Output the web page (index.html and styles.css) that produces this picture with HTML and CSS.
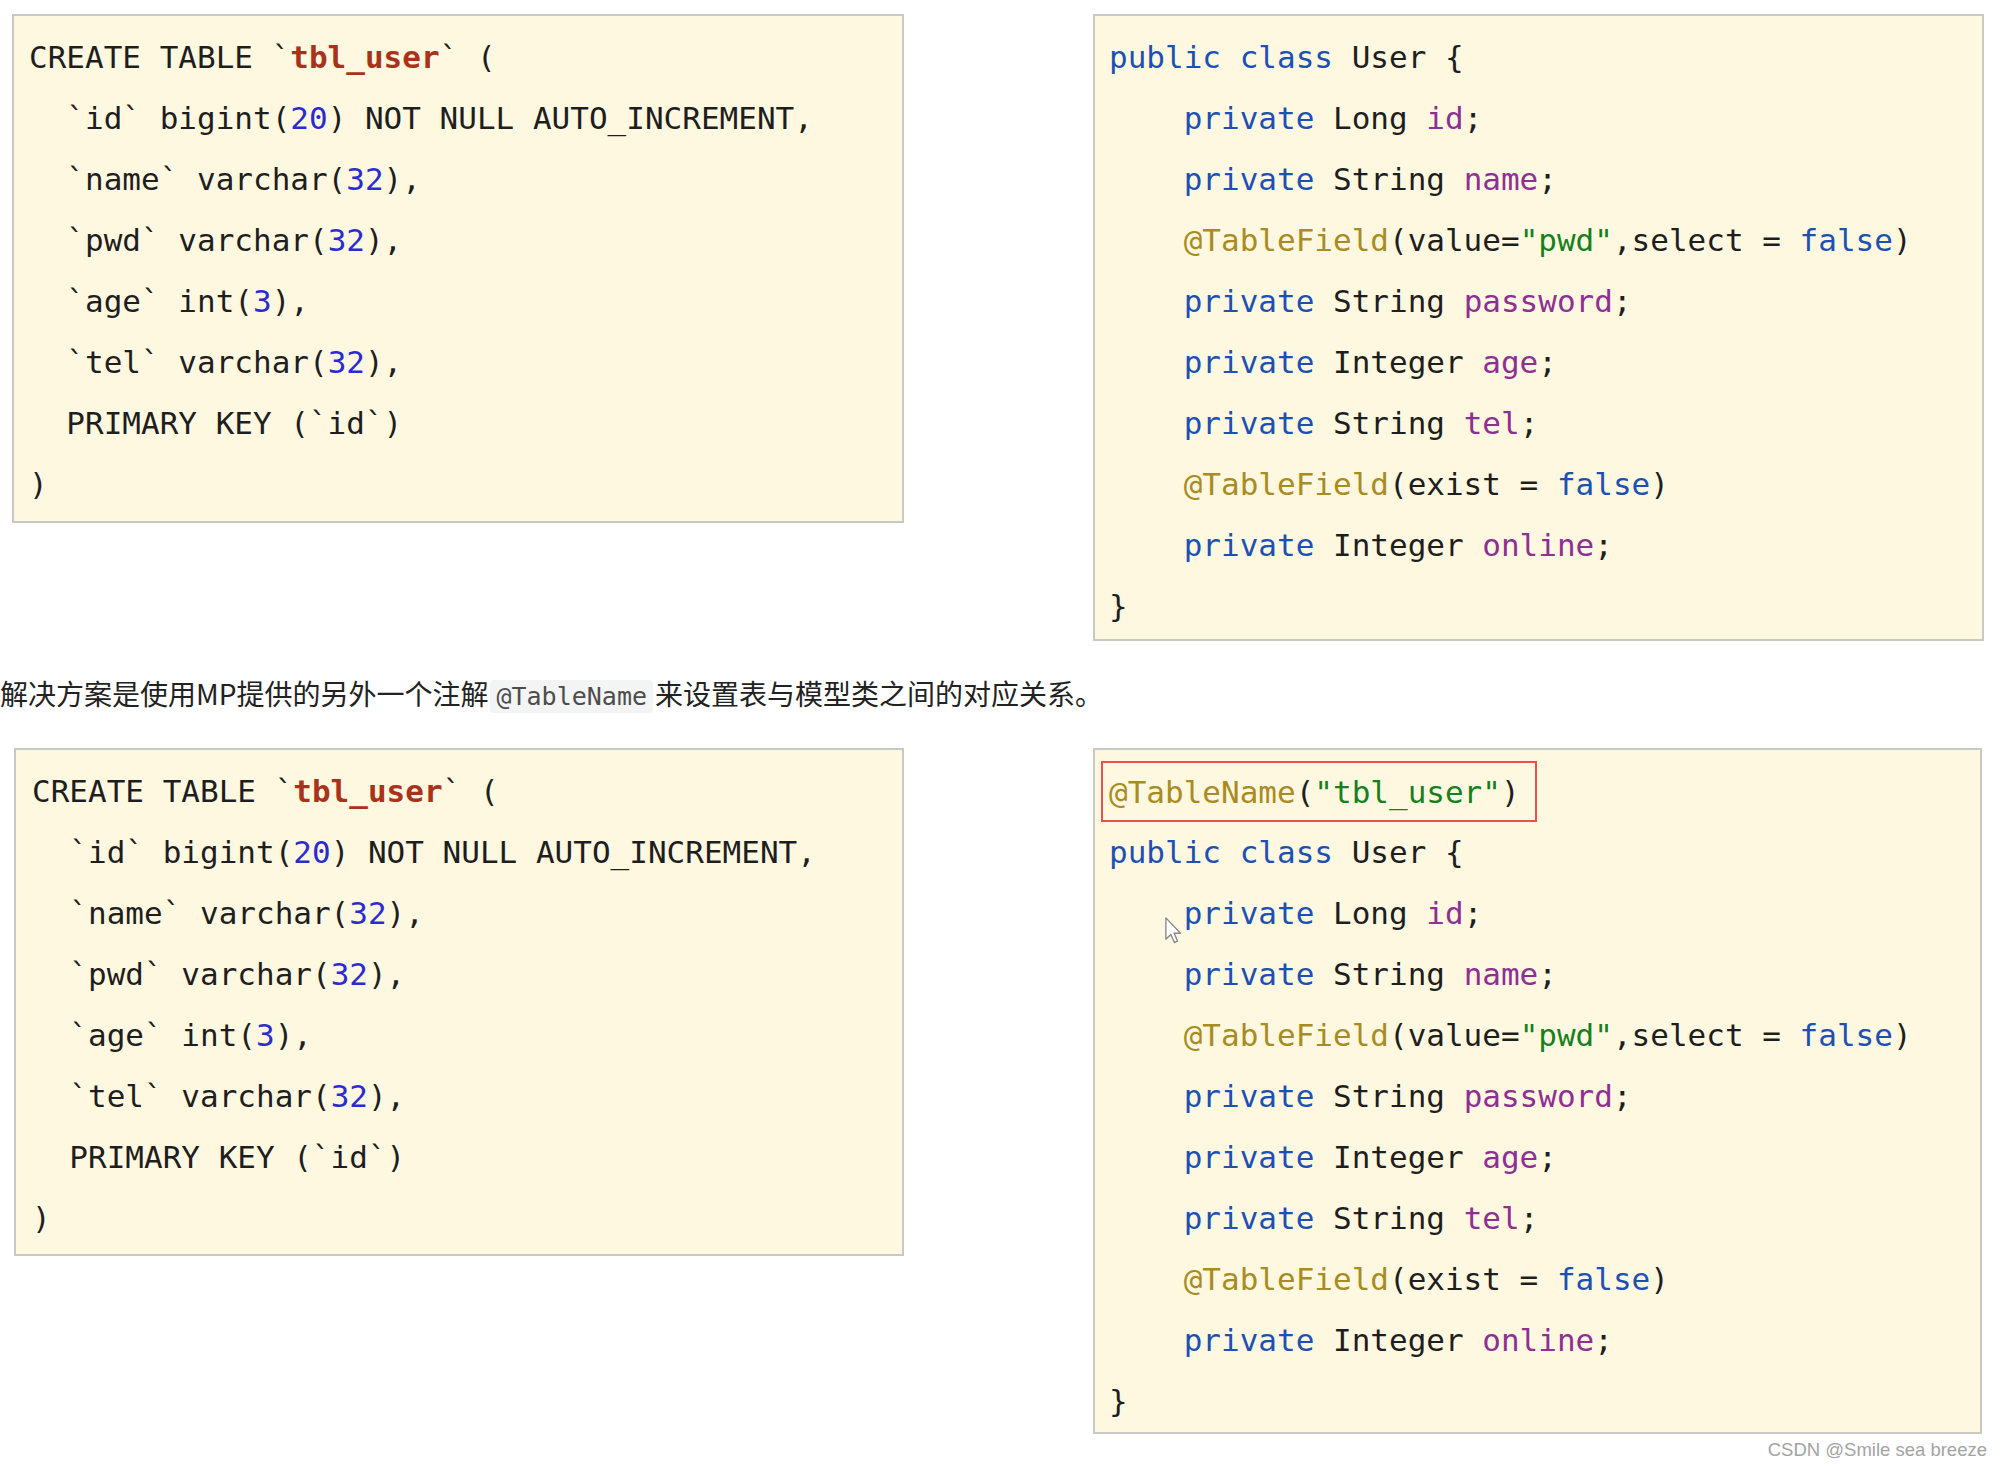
FILE: index.html
```html
<!DOCTYPE html>
<html lang="zh-CN">
<head>
<meta charset="utf-8">
<title>MP @TableName</title>
<link rel="stylesheet" href="styles.css">
</head>
<body>
<div class="page">
  <div class="row row-top">
    <div class="code sql box-tl">
      <div class="ln">CREATE TABLE `<span class="s">tbl_user</span>` (</div>
      <div class="ln">  `id` bigint(<span class="n">20</span>) NOT NULL AUTO_INCREMENT,</div>
      <div class="ln">  `name` varchar(<span class="n">32</span>),</div>
      <div class="ln">  `pwd` varchar(<span class="n">32</span>),</div>
      <div class="ln">  `age` int(<span class="n">3</span>),</div>
      <div class="ln">  `tel` varchar(<span class="n">32</span>),</div>
      <div class="ln">  PRIMARY KEY (`id`)</div>
      <div class="ln">)</div>
    </div>
    <div class="code java box-tr">
      <div class="ln"><span class="k">public</span> <span class="k">class</span> User {</div>
      <div class="ln">    <span class="k">private</span> Long <span class="f">id</span>;</div>
      <div class="ln">    <span class="k">private</span> String <span class="f">name</span>;</div>
      <div class="ln">    <span class="a">@TableField</span>(value=<span class="str">"pwd"</span>,select = <span class="k">false</span>)</div>
      <div class="ln">    <span class="k">private</span> String <span class="f">password</span>;</div>
      <div class="ln">    <span class="k">private</span> Integer <span class="f">age</span>;</div>
      <div class="ln">    <span class="k">private</span> String <span class="f">tel</span>;</div>
      <div class="ln">    <span class="a">@TableField</span>(exist = <span class="k">false</span>)</div>
      <div class="ln">    <span class="k">private</span> Integer <span class="f">online</span>;</div>
      <div class="ln">}</div>
    </div>
  </div>

  <p class="desc">解决方案是使用MP提供的另外一个注解<code class="inline">@TableName</code>来设置表与模型类之间的对应关系。</p>

  <div class="row row-bottom">
    <div class="code sql box-bl">
      <div class="ln">CREATE TABLE `<span class="s">tbl_user</span>` (</div>
      <div class="ln">  `id` bigint(<span class="n">20</span>) NOT NULL AUTO_INCREMENT,</div>
      <div class="ln">  `name` varchar(<span class="n">32</span>),</div>
      <div class="ln">  `pwd` varchar(<span class="n">32</span>),</div>
      <div class="ln">  `age` int(<span class="n">3</span>),</div>
      <div class="ln">  `tel` varchar(<span class="n">32</span>),</div>
      <div class="ln">  PRIMARY KEY (`id`)</div>
      <div class="ln">)</div>
    </div>
    <div class="code java box-br">
      <div class="ln hl"><span class="a">@TableName</span>(<span class="str">"tbl_user"</span>)</div>
      <div class="ln"><span class="k">public</span> <span class="k">class</span> User {</div>
      <div class="ln">    <span class="k">private</span> Long <span class="f">id</span>;</div>
      <div class="ln">    <span class="k">private</span> String <span class="f">name</span>;</div>
      <div class="ln">    <span class="a">@TableField</span>(value=<span class="str">"pwd"</span>,select = <span class="k">false</span>)</div>
      <div class="ln">    <span class="k">private</span> String <span class="f">password</span>;</div>
      <div class="ln">    <span class="k">private</span> Integer <span class="f">age</span>;</div>
      <div class="ln">    <span class="k">private</span> String <span class="f">tel</span>;</div>
      <div class="ln">    <span class="a">@TableField</span>(exist = <span class="k">false</span>)</div>
      <div class="ln">    <span class="k">private</span> Integer <span class="f">online</span>;</div>
      <div class="ln">}</div>
    </div>
  </div>

  <div class="watermark">CSDN @Smile sea breeze</div>

  <svg class="cursor" width="20" height="30" viewBox="0 0 16 24" aria-hidden="true">
    <path d="M1.5 1.5 L1.5 18.5 L5.5 14.8 L8.3 21.2 L10.8 20.1 L8.1 13.8 L13.2 13.8 Z" fill="#ffffff" stroke="#8a8a8a" stroke-width="1.1" stroke-linejoin="round"/>
  </svg>
</div>
</body>
</html>
```

FILE: styles.css
```css
* {
  box-sizing: border-box;
}

html, body {
  margin: 0;
  padding: 0;
  background: #ffffff;
}

.page {
  position: relative;
  width: 2003px;
  min-height: 1466px;
  padding-top: 14px;
  font-family: "Noto Sans CJK SC", "Noto Sans", sans-serif;
  color: #222222;
}

.row {
  display: flex;
  align-items: flex-start;
}

.code {
  background: #fef8e0;
  border: 2px solid #c9c9c4;
  font-family: "DejaVu Sans Mono", "Liberation Mono", monospace;
  font-size: 31px;
  color: #1e1e1e;
  padding-top: 11px;
}

.code .ln {
  height: 61px;
  line-height: 61px;
  white-space: pre;
}

.box-tl {
  margin-left: 12px;
  width: 892px;
  padding-left: 15px;
  padding-bottom: 6px;
}

.box-tr {
  margin-left: 189px;
  width: 891px;
  padding-left: 14px;
  padding-bottom: 2px;
}

.box-bl {
  margin-left: 14px;
  width: 890px;
  padding-left: 16px;
  padding-bottom: 5px;
}

.box-br {
  margin-left: 189px;
  width: 889px;
  padding-left: 14px;
  padding-bottom: 0;
}

.code .hl {
  width: fit-content;
  margin-left: -8px;
  padding: 0 15px 0 6px;
  border: 2px solid #e8514f;
  line-height: 59px;
  height: 61px;
}

/* syntax colours */
.s {
  color: #a8321a;
  font-weight: bold;
}

.n {
  color: #2b2bd2;
}

.k {
  color: #1d50b3;
}

.f {
  color: #8e2f93;
}

.a {
  color: #a88c22;
}

.str {
  color: #17801e;
}

.desc {
  margin: 32px 0 31px 0;
  font-size: 28px;
  line-height: 40px;
  color: #222222;
}

.inline {
  font-family: "DejaVu Sans Mono", "Liberation Mono", monospace;
  font-size: 25px;
  color: #4d4d4d;
  background: #f3f4f4;
  border-radius: 4px;
  padding: 2px 6px;
  margin: 0 2px;
}

.watermark {
  margin-top: 6px;
  padding-right: 16px;
  text-align: right;
  font-family: "Liberation Sans", Arial, sans-serif;
  font-size: 18.5px;
  line-height: 20px;
  color: #a3a3a3;
}

.cursor {
  position: absolute;
  left: 1164px;
  top: 916px;
}
```
